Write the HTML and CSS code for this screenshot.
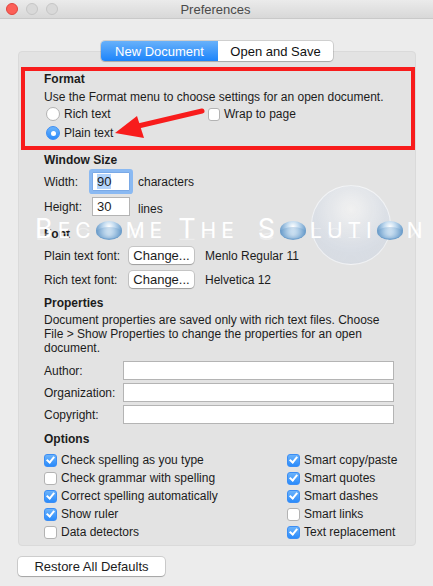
FILE: index.html
```html
<!DOCTYPE html>
<html lang="en">
<head>
  <meta charset="UTF-8">
  <title>Preferences</title>
  <link rel="stylesheet" href="styles.css">
</head>
<body>
  <div class="window">
    <div class="titlebar">
      <div class="lights">
        <span class="light close"></span>
        <span class="light"></span>
        <span class="light"></span>
      </div>
      <div class="title">Preferences</div>
    </div>

    <div class="content">
      <div class="tabs">
        <div class="segmented">
          <span class="seg active">New Document</span>
          <span class="seg">Open and Save</span>
        </div>
      </div>

      <div class="group">
        <!-- Format (highlighted with the red box) -->
        <div class="format">
          <div class="heading">Format</div>
          <div class="line">Use the Format menu to choose settings for an open document.</div>
          <div class="format-grid">
            <div class="choice"><span class="radio"></span>Rich text</div>
            <div class="choice"><span class="check"></span>Wrap to page</div>
            <div class="choice"><span class="radio on"></span>Plain text</div>
          </div>
        </div>

        <div class="section size">
          <div class="heading">Window Size</div>
          <div class="size-row">
            <span class="size-label">Width:</span>
            <span class="field num focus"><span class="selected">90</span></span>
            <span>characters</span>
          </div>
          <div class="size-row second">
            <span class="size-label">Height:</span>
            <span class="field num">30</span>
            <span class="unit">lines</span>
          </div>
        </div>

        <div class="section font">
          <div class="heading">Font</div>
          <div class="font-row">
            <span class="font-label">Plain text font:</span>
            <span class="button">Change...</span>
            <span>Menlo Regular 11</span>
          </div>
          <div class="font-row second">
            <span class="font-label">Rich text font:</span>
            <span class="button">Change...</span>
            <span>Helvetica 12</span>
          </div>
        </div>

        <div class="section props">
          <div class="heading">Properties</div>
          <p class="para">Document properties are saved only with rich text files. Choose File &gt; Show Properties to change the properties for an open document.</p>
          <div class="prop-list">
            <div class="prop-row"><span class="prop-label">Author:</span><span class="field wide"></span></div>
            <div class="prop-row"><span class="prop-label">Organization:</span><span class="field wide"></span></div>
            <div class="prop-row"><span class="prop-label">Copyright:</span><span class="field wide"></span></div>
          </div>
        </div>

        <div class="section options">
          <div class="heading">Options</div>
          <div class="options-grid">
            <div class="choice"><span class="check on"></span>Check spelling as you type</div>
            <div class="choice"><span class="check on"></span>Smart copy/paste</div>
            <div class="choice"><span class="check"></span>Check grammar with spelling</div>
            <div class="choice"><span class="check on"></span>Smart quotes</div>
            <div class="choice"><span class="check on"></span>Correct spelling automatically</div>
            <div class="choice"><span class="check on"></span>Smart dashes</div>
            <div class="choice"><span class="check on"></span>Show ruler</div>
            <div class="choice"><span class="check"></span>Smart links</div>
            <div class="choice"><span class="check"></span>Data detectors</div>
            <div class="choice"><span class="check on"></span>Text replacement</div>
          </div>
        </div>
      </div>

      <div class="restore">Restore All Defaults</div>
    </div>

    <!-- watermark laid over the window -->
    <div class="sphere"></div>
    <div class="watermark">
      <span class="cap">B</span>EC<span class="bubble">O</span>ME <span class="cap">T</span>HE <span class="cap s">S</span><span class="bubble">O</span>LUTI<span class="bubble">O</span>N
    </div>
    <div class="watermark reflect">
      <span class="cap">B</span>EC<span class="bubble">O</span>ME <span class="cap">T</span>HE <span class="cap s">S</span><span class="bubble">O</span>LUTI<span class="bubble">O</span>N
    </div>

    <!-- annotation arrow -->
    <svg class="arrow" width="433" height="586" viewBox="0 0 433 586">
      <line x1="202" y1="111" x2="134" y2="127" stroke="#f81c1c" stroke-width="5" stroke-linecap="round"/>
      <polygon points="115,133 137,116 144,138" fill="#f81c1c"/>
    </svg>
  </div>
</body>
</html>
```

FILE: styles.css
```css
* {
  margin: 0;
  padding: 0;
  box-sizing: border-box;
}

body {
  font-family: 'Liberation Sans', Helvetica, Arial, sans-serif;
  font-size: 12px;
  color: #1c1c1c;
  background-color: #ececec;
}

.window {
  position: relative;
  width: 433px;
  height: 586px;
  overflow: hidden;
  background-color: #ececec;
}

/* Title bar */
.titlebar {
  height: 19px;
  border-bottom: 1px solid #c9c9c9;
  background: linear-gradient(#ebebeb, #d8d8d8);
  display: flex;
  align-items: center;
  position: relative;
}

.lights {
  display: flex;
  gap: 8px;
  padding-left: 6px;
}

.light {
  width: 12px;
  height: 12px;
  border-radius: 50%;
  background-color: #d9d9d9;
  border: 1px solid #c6c6c6;
}

.light.close {
  background-color: #fc5f57;
  border-color: #e0443e;
}

.title {
  flex: 1;
  text-align: center;
  margin-right: 60px;
  font-size: 13px;
  color: #4a4a4a;
}

/* Segmented control */
.tabs {
  display: flex;
  justify-content: center;
  margin-top: 22px;
  margin-bottom: -10px;
  position: relative;
  z-index: 1;
  padding-left: 1px;
}

.segmented {
  display: flex;
  height: 20px;
  border-radius: 4px;
  background-color: #fff;
  box-shadow: 0 0 0 1px rgba(0, 0, 0, 0.12), 0 1px 1px rgba(0, 0, 0, 0.15);
  overflow: hidden;
  font-size: 13px;
}

.seg {
  display: flex;
  align-items: center;
  justify-content: center;
  width: 115px;
  color: #111;
}

.seg.active {
  width: 117px;
  color: #fff;
  background: linear-gradient(#68b1fa, #1c84fb);
}

/* Group box */
.group {
  margin: 0 17px 0 18px;
  padding: 15px 0 4px 0;
  background-color: #e3e3e3;
  border: 1px solid #dadada;
  border-radius: 4px;
}

.heading {
  font-weight: bold;
  height: 16px;
  line-height: 16px;
}

.line {
  height: 16px;
  line-height: 16px;
  margin-top: 2px;
}

.format {
  margin-left: 2px;
  border: 4px solid #f81c1c;
  padding: 0 0 4px 19px;
}

.format-grid {
  display: grid;
  grid-template-columns: 162px auto;
  grid-auto-rows: 18px;
  row-gap: 1px;
  margin-left: 2px;
}

.choice {
  display: flex;
  align-items: center;
  gap: 4px;
  white-space: nowrap;
}

.radio {
  width: 14px;
  height: 14px;
  border-radius: 50%;
  background-color: #fff;
  border: 1px solid #b3b3b3;
  display: flex;
  align-items: center;
  justify-content: center;
}

.radio.on {
  border-color: #3b8ef5;
  background: linear-gradient(#6cb3fa, #2a8bfb);
}

.radio.on::after {
  content: "";
  width: 5px;
  height: 5px;
  border-radius: 50%;
  background-color: #fff;
}

.check {
  width: 13px;
  height: 13px;
  border-radius: 3px;
  background-color: #fff;
  border: 1px solid #b3b3b3;
  display: flex;
  align-items: center;
  justify-content: center;
}

.check.on {
  border-color: #3b8ef5;
  background: linear-gradient(#6cb3fa, #2a8bfb);
}

.check.on::after {
  content: "";
  width: 3px;
  height: 6px;
  border: solid #fff;
  border-width: 0 2px 2px 0;
  transform: translate(0, -1px) rotate(40deg);
}

.format .choice .check {
  width: 12px;
  height: 13px;
}

/* Sections */
.section {
  padding-left: 25px;
}

.size {
  margin-top: 2px;
}

.size-row,
.font-row {
  display: flex;
  align-items: center;
  height: 19px;
  margin-top: 4px;
}

.size-row.second {
  margin-top: 6px;
}

.size-label {
  width: 48px;
}

.field {
  display: inline-block;
  height: 19px;
  background-color: #fff;
  border: 1px solid #b4b4b4;
}

.field.num {
  width: 38px;
  margin-right: 8px;
  padding-left: 4px;
  line-height: 17px;
  font-size: 13px;
}

.field.focus {
  box-shadow: 0 0 0 3px #8ab9f2;
  border-color: #7aa9e6;
  border-radius: 1px;
}

.selected {
  background-color: #b3d4fc;
}

.unit {
  padding-top: 4px;
}

.font {
  margin-top: 10px;
}

.font-row.second {
  margin-top: 5px;
}

.font-label {
  width: 85px;
}

.button {
  width: 65px;
  height: 17px;
  margin-right: 11px;
  display: flex;
  align-items: center;
  justify-content: center;
  background-color: #fff;
  border-radius: 4px;
  box-shadow: 0 0 0 1px rgba(0, 0, 0, 0.13), 0 1px 1px rgba(0, 0, 0, 0.2);
  font-size: 13px;
}

.props {
  margin-top: 6px;
}

.para {
  margin-top: 2px;
  width: 350px;
  line-height: 14px;
}

.prop-list {
  display: flex;
  flex-direction: column;
  gap: 3px;
  margin-top: 6px;
}

.prop-row {
  display: flex;
  align-items: center;
  height: 19px;
}

.prop-label {
  width: 79px;
}

.field.wide {
  width: 271px;
  height: 19px;
}

.options {
  margin-top: 7px;
}

.options-grid {
  display: grid;
  grid-template-columns: 243px auto;
  grid-auto-rows: 18px;
  margin-top: 4px;
}

/* Bottom button */
.restore {
  margin: 11px 0 0 18px;
  width: 147px;
  height: 19px;
  display: flex;
  align-items: center;
  justify-content: center;
  background-color: #fff;
  border-radius: 4px;
  box-shadow: 0 0 0 1px rgba(0, 0, 0, 0.13), 0 1px 1px rgba(0, 0, 0, 0.2);
  font-size: 13px;
}

/* Watermark overlay */
.sphere {
  position: absolute;
  left: 311px;
  top: 185px;
  width: 80px;
  height: 80px;
  border-radius: 50%;
  border: 1px solid rgba(255, 255, 255, 0.6);
  background: radial-gradient(circle at 50% 30%, rgba(255, 255, 255, 0.5), rgba(210, 218, 230, 0.6) 60%, rgba(200, 208, 220, 0.5));
}

.watermark {
  position: absolute;
  left: 35px;
  top: 215px;
  white-space: nowrap;
  font-family: Inter, 'DejaVu Sans', sans-serif;
  font-weight: 400;
  font-size: 21px;
  letter-spacing: 5px;
  color: #ffffff;
  line-height: 28px;
}

.watermark .cap {
  font-size: 27px;
}

.watermark .cap.s {
  margin-left: 8px;
}

.watermark .bubble {
  display: inline-block;
  width: 26px;
  height: 19px;
  border-radius: 50%;
  color: transparent;
  line-height: 19px;
  letter-spacing: 0;
  background: radial-gradient(ellipse at 50% 30%, #ffffff 0%, #c4dcf0 30%, #6e9fcc 70%, #3d77ad 100%);
  margin: 0 4px 0 0;
}

.watermark.reflect {
  top: 242px;
  transform: scaleY(-0.6);
  transform-origin: top;
  opacity: 0.35;
}

.arrow {
  position: absolute;
  left: 0;
  top: 0;
  pointer-events: none;
}
```
